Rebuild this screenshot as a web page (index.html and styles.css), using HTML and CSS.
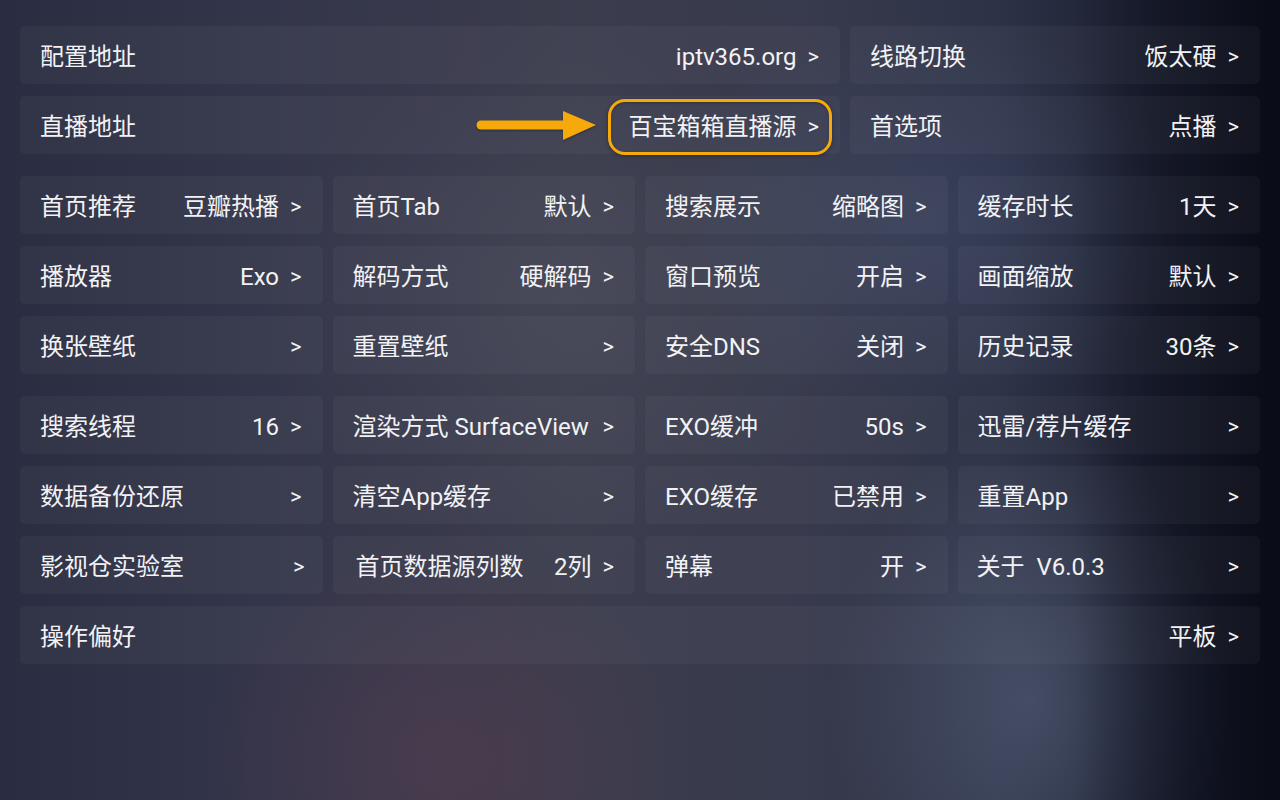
FILE: index.html
```html
<!DOCTYPE html>
<html lang="zh-CN">
<head>
<meta charset="utf-8">
<title>设置</title>
<link rel="stylesheet" href="styles.css">
</head>
<body>
<main class="settings">
  <section class="group group-top">
    <div class="item"><span class="label">配置地址</span><span class="value">iptv365.org<span class="chev">&gt;</span></span></div>
    <div class="item"><span class="label">线路切换</span><span class="value">饭太硬<span class="chev">&gt;</span></span></div>
    <div class="item"><span class="label">直播地址</span><span class="value hl">百宝箱箱直播源<span class="chev">&gt;</span><svg class="pointer" width="122" height="32" viewBox="0 0 122 32"><line x1="5" y1="15" x2="92" y2="15" stroke="#f6a90b" stroke-width="9" stroke-linecap="round"/><polygon points="87,1 120,15 87,30" fill="#f6a90b"/></svg></span></div>
    <div class="item"><span class="label">首选项</span><span class="value">点播<span class="chev">&gt;</span></span></div>
  </section>

  <section class="group group-four">
    <div class="item"><span class="label">首页推荐</span><span class="value">豆瓣热播<span class="chev">&gt;</span></span></div>
    <div class="item"><span class="label">首页Tab</span><span class="value">默认<span class="chev">&gt;</span></span></div>
    <div class="item"><span class="label">搜索展示</span><span class="value">缩略图<span class="chev">&gt;</span></span></div>
    <div class="item"><span class="label">缓存时长</span><span class="value">1天<span class="chev">&gt;</span></span></div>

    <div class="item"><span class="label">播放器</span><span class="value">Exo<span class="chev">&gt;</span></span></div>
    <div class="item"><span class="label">解码方式</span><span class="value">硬解码<span class="chev">&gt;</span></span></div>
    <div class="item"><span class="label">窗口预览</span><span class="value">开启<span class="chev">&gt;</span></span></div>
    <div class="item"><span class="label">画面缩放</span><span class="value">默认<span class="chev">&gt;</span></span></div>

    <div class="item"><span class="label">换张壁纸</span><span class="value"><span class="chev">&gt;</span></span></div>
    <div class="item"><span class="label">重置壁纸</span><span class="value"><span class="chev">&gt;</span></span></div>
    <div class="item"><span class="label">安全DNS</span><span class="value">关闭<span class="chev">&gt;</span></span></div>
    <div class="item"><span class="label">历史记录</span><span class="value">30条<span class="chev">&gt;</span></span></div>
  </section>

  <section class="group group-four">
    <div class="item"><span class="label">搜索线程</span><span class="value">16<span class="chev">&gt;</span></span></div>
    <div class="item"><span class="label">渲染方式 SurfaceView</span><span class="value"><span class="chev">&gt;</span></span></div>
    <div class="item"><span class="label">EXO缓冲</span><span class="value">50s<span class="chev">&gt;</span></span></div>
    <div class="item"><span class="label">迅雷/荐片缓存</span><span class="value"><span class="chev">&gt;</span></span></div>

    <div class="item"><span class="label">数据备份还原</span><span class="value"><span class="chev">&gt;</span></span></div>
    <div class="item"><span class="label">清空App缓存</span><span class="value"><span class="chev">&gt;</span></span></div>
    <div class="item"><span class="label">EXO缓存</span><span class="value">已禁用<span class="chev">&gt;</span></span></div>
    <div class="item"><span class="label">重置App</span><span class="value"><span class="chev">&gt;</span></span></div>

    <div class="item"><span class="label">影视仓实验室</span><span class="value nudge"><span class="chev">&gt;</span></span></div>
    <div class="item"><span class="label indent">首页数据源列数</span><span class="value">2列<span class="chev">&gt;</span></span></div>
    <div class="item"><span class="label">弹幕</span><span class="value">开<span class="chev">&gt;</span></span></div>
    <div class="item"><span class="label outdent">关于&nbsp; V6.0.3</span><span class="value"><span class="chev">&gt;</span></span></div>

    <div class="item wide"><span class="label">操作偏好</span><span class="value">平板<span class="chev">&gt;</span></span></div>
  </section>
</main>
</body>
</html>
```

FILE: styles.css
```css
html, body {
  margin: 0;
  padding: 0;
  width: 1280px;
  height: 800px;
  overflow: hidden;
}

body {
  font-family: Roboto, "Noto Sans CJK SC", sans-serif;
  color: #f2f2f4;
  background:
    linear-gradient(to right, rgba(0,0,0,0) 0%, rgba(0,0,0,0) 84%, rgba(10,12,24,0.55) 94%, rgba(8,10,20,0.85) 100%),
    radial-gradient(ellipse 240px 220px at 440px 760px, rgba(95,62,82,0.45), rgba(95,62,82,0) 100%),
    radial-gradient(ellipse 200px 280px at 1030px 700px, rgba(95,108,135,0.5), rgba(95,108,135,0) 100%),
    radial-gradient(ellipse 260px 200px at 930px 220px, rgba(70,85,120,0.35), rgba(70,85,120,0) 100%),
    radial-gradient(ellipse 300px 260px at 560px 300px, rgba(80,82,96,0.35), rgba(80,82,96,0) 100%),
    linear-gradient(to right, #2a2c41 0%, #33354a 20%, #3b3c4c 45%, #383b4d 62%, #2d3247 78%, #1b1f30 90%, #121523 100%);
}

.settings {
  box-sizing: border-box;
  padding: 26px 20px 0 20px;
  display: flex;
  flex-direction: column;
  gap: 22px;
}

.group {
  display: grid;
  column-gap: 10px;
  row-gap: 12px;
  grid-auto-rows: 58px;
}

.group-top {
  grid-template-columns: 820px 1fr;
}

.group-four {
  grid-template-columns: repeat(4, 1fr);
}

.item {
  display: flex;
  align-items: center;
  justify-content: space-between;
  padding: 3px 21px 0 20px;
  background: rgba(255, 255, 255, 0.036);
  border-radius: 5px;
  font-size: 24px;
  line-height: 30px;
  white-space: nowrap;
}

.item.wide {
  grid-column: 1 / -1;
}

.value {
  position: relative;
  display: flex;
  align-items: center;
}

.chev {
  margin-left: 11px;
  font-size: 22px;
}

.nudge {
  left: 3px;
}

.indent {
  margin-left: 3px;
}

.outdent {
  margin-left: -1px;
}

.hl::after {
  content: "";
  position: absolute;
  left: -20px;
  right: -13px;
  top: -13px;
  bottom: -13px;
  border: 3px solid #f6a90b;
  border-radius: 17px;
  box-shadow: 0 1px 4px rgba(0, 0, 0, 0.35), inset 0 1px 3px rgba(0, 0, 0, 0.25);
}

.pointer {
  position: absolute;
  left: -152px;
  top: -2px;
  filter: drop-shadow(0 1px 1px rgba(0, 0, 0, 0.3));
}
```
